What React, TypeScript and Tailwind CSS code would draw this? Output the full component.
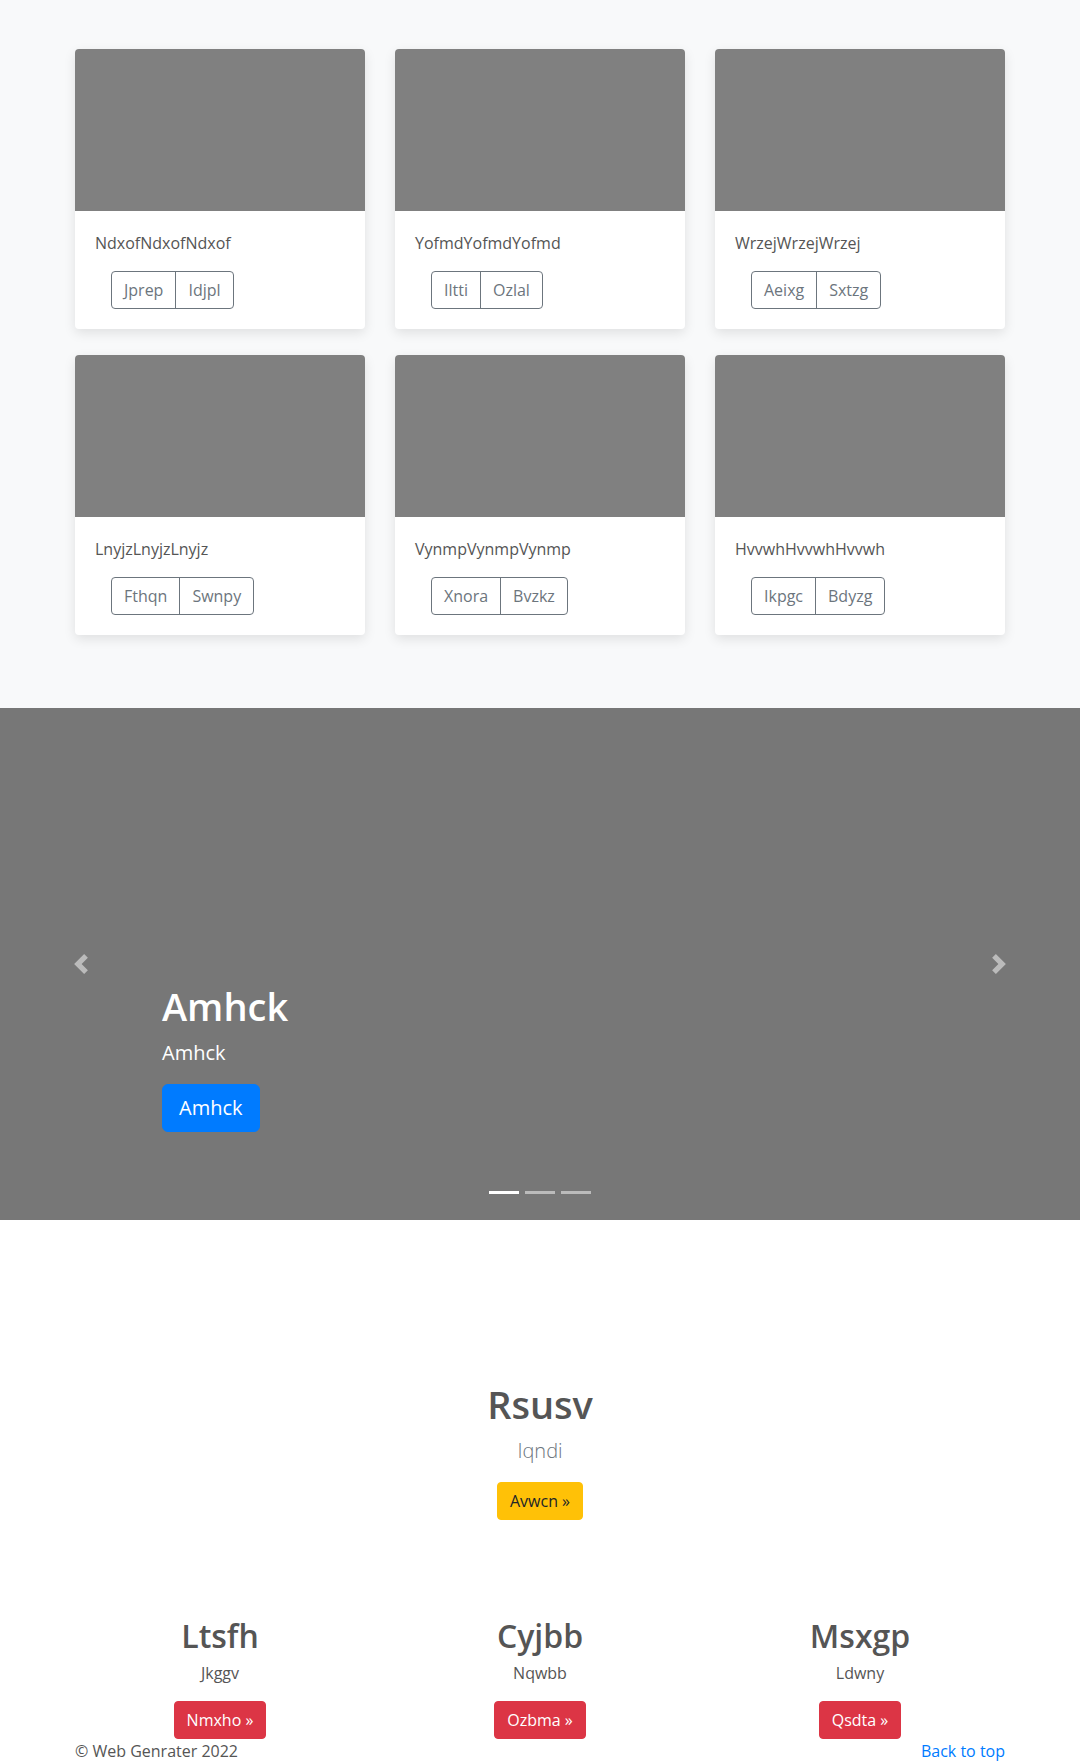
const cards = [
  { title: 'NdxofNdxofNdxof', buttons: ['Jprep', 'Idjpl'] },
  { title: 'YofmdYofmdYofmd', buttons: ['Iltti', 'Ozlal'] },
  { title: 'WrzejWrzejWrzej', buttons: ['Aeixg', 'Sxtzg'] },
  { title: 'LnyjzLnyjzLnyjz', buttons: ['Fthqn', 'Swnpy'] },
  { title: 'VynmpVynmpVynmp', buttons: ['Xnora', 'Bvzkz'] },
  { title: 'HvvwhHvvwhHvvwh', buttons: ['Ikpgc', 'Bdyzg'] },
]

const features = [
  { title: 'Ltsfh', text: 'Jkggv', action: 'Nmxho' },
  { title: 'Cyjbb', text: 'Nqwbb', action: 'Ozbma' },
  { title: 'Msxgp', text: 'Ldwny', action: 'Qsdta' },
]

function Card({ title, buttons }: { title: string; buttons: string[] }) {
  return (
    <div className="overflow-hidden rounded bg-white shadow-[0_4px_12px_rgba(0,0,0,0.1)]">
      <div className="h-[162px] bg-[#808080]" />
      <div className="p-5">
        <p className="mb-4 text-base leading-6 text-[#555]">{title}</p>
        <div className="ml-4 inline-flex rounded border border-[#6c757d] text-[#6c757d]">
          {buttons.map((label, i) => (
            <span
              key={label}
              className={
                i === 0
                  ? 'px-3 py-1.5 text-base leading-6'
                  : 'border-l border-[#6c757d] px-3 py-1.5 text-base leading-6'
              }
            >
              {label}
            </span>
          ))}
        </div>
      </div>
    </div>
  )
}

function Chevron({ dir }: { dir: 'prev' | 'next' }) {
  return (
    <svg width="20" height="20" viewBox="0 0 8 8" fill="#fff">
      {dir === 'prev' ? (
        <path d="M5.25 0l-4 4 4 4 1.5-1.5-2.5-2.5 2.5-2.5-1.5-1.5z" />
      ) : (
        <path d="M2.75 0l-1.5 1.5 2.5 2.5-2.5 2.5 1.5 1.5 4-4-4-4z" />
      )}
    </svg>
  )
}

export default function App() {
  return (
    <div className="min-h-[1764px] bg-white font-['Open_Sans',sans-serif] text-[#555]">
      <section className="bg-[#f8f9fa] pb-[73px] pt-[49px]">
        <div className="mx-auto w-[960px] px-[15px]">
          <div className="grid grid-cols-3 gap-x-[30px] gap-y-[26px]">
            {cards.map((c) => (
              <Card key={c.title} title={c.title} buttons={c.buttons} />
            ))}
          </div>
        </div>
      </section>

      <section className="relative h-[512px] bg-[#777]">
        <div className="absolute inset-y-0 left-0 flex w-[15%] items-center justify-center opacity-50">
          <Chevron dir="prev" />
        </div>
        <div className="absolute inset-y-0 right-0 flex w-[15%] items-center justify-center opacity-50">
          <Chevron dir="next" />
        </div>

        <div className="absolute bottom-[68px] left-[15%] right-[15%] py-5 text-white">
          <h1 className="mb-2 text-[38px] font-semibold leading-[48px]">Amhck</h1>
          <p className="mb-4 text-xl leading-[30px]">Amhck</p>
          <span className="inline-block rounded-md border border-[#007bff] bg-[#007bff] px-4 py-2 text-xl leading-[30px] text-white">
            Amhck
          </span>
        </div>

        <div className="absolute bottom-[26px] left-0 right-0 flex justify-center gap-[6px]">
          <span className="h-[3px] w-[30px] bg-white" />
          <span className="h-[3px] w-[30px] bg-white opacity-50" />
          <span className="h-[3px] w-[30px] bg-white opacity-50" />
        </div>
      </section>

      <section className="pt-[162px]">
        <div className="mx-auto w-[960px] px-[15px] text-center">
          <h1 className="mb-2 text-[38px] font-semibold leading-[1.2] text-[#555]">Rsusv</h1>
          <p className="mb-4 text-xl font-light leading-[30px] text-[#6c757d]">Iqndi</p>
          <span className="inline-block rounded border border-[#ffc107] bg-[#ffc107] px-3 py-1.5 text-base leading-6 text-[#212529]">
            Avwcn &raquo;
          </span>

          <div className="mt-[97px] grid grid-cols-3 gap-x-[30px]">
            {features.map((f) => (
              <div key={f.title}>
                <h2 className="mb-[6px] text-[32px] font-semibold leading-[1.2] text-[#555]">{f.title}</h2>
                <p className="mb-4 text-base leading-6 text-[#555]">{f.text}</p>
                <span className="inline-block rounded border border-[#dc3545] bg-[#dc3545] px-3 py-1.5 text-base leading-6 text-white">
                  {f.action} &raquo;
                </span>
              </div>
            ))}
          </div>
        </div>
      </section>

      <footer className="mx-auto flex w-[960px] justify-between px-[15px] text-base leading-6">
        <p className="text-[#555]">&copy; Web Genrater 2022</p>
        <a className="text-[#007bff]" href="#">
          Back to top
        </a>
      </footer>
    </div>
  )
}
